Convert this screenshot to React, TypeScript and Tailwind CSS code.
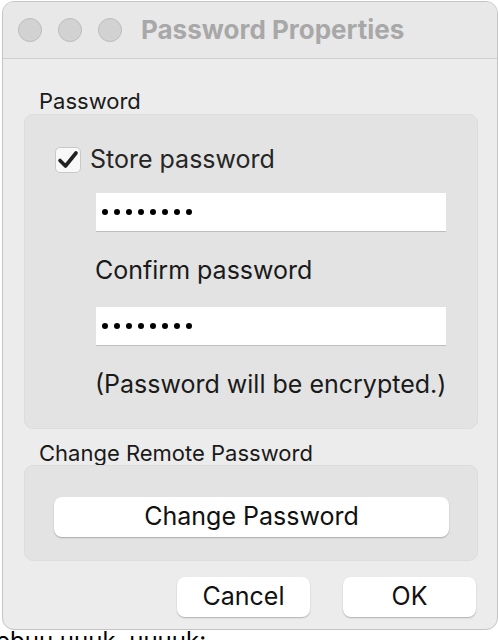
import React from "react";

function Dots() {
  return (
    <div className="flex items-center gap-[6.5px] pl-[6px]">
      {Array.from({ length: 8 }).map((_, i) => (
        <span key={i} className="block w-[5.5px] h-[5.5px] rounded-full bg-black" />
      ))}
    </div>
  );
}

export default function App() {
  const font = { fontFamily: "Inter, 'Noto Sans', sans-serif" };
  return (
    <div className="relative w-[498px] h-[640px] overflow-hidden bg-white" style={font}>
      <div className="absolute left-[-4px] top-[629px] text-[24px] leading-none text-black whitespace-nowrap">
        ebuu uuuk, uuuuk:
      </div>
      <div className="relative ml-[2px] mt-[1px] w-[496px] h-[629px] rounded-[12px] border border-[#c4c4c4] bg-[#ececec] overflow-hidden flex flex-col">
        <div className="h-[57px] shrink-0 border-b border-[#cfcfcf] bg-[#e8e8e8] flex items-center pl-[15px]">
          <div className="flex gap-[16px]">
            <span className="block w-[24px] h-[24px] rounded-full bg-[#d2d2d2] border border-[#bdbdbd]" />
            <span className="block w-[24px] h-[24px] rounded-full bg-[#d2d2d2] border border-[#bdbdbd]" />
            <span className="block w-[24px] h-[24px] rounded-full bg-[#d2d2d2] border border-[#bdbdbd]" />
          </div>
          <div className="ml-[19px] text-[26px] font-bold text-[#a8a8a8] leading-none">
            Password Properties
          </div>
        </div>

        <div className="flex flex-col pl-[21px] pr-[19px]">
          <div className="mt-[30px] h-[25px] flex items-center pl-[15px] text-[22px] text-[#1a1a1a]">Password</div>
          <div className="h-[315px] rounded-[9px] border border-[#dcdcdc] bg-[#e3e3e3] flex flex-col pl-[30px] pt-[32px]">
            <div className="h-[26px] flex items-center">
              <span className="w-[26px] h-[26px] rounded-[5px] bg-[#f8f8f8] border border-[#c9c9c9] flex items-center justify-center">
                <svg width="22" height="20" viewBox="0 0 22 20">
                  <path d="M3 10.5 L8.5 16 L19 3" fill="none" stroke="#222" strokeWidth="3.6" strokeLinecap="round" strokeLinejoin="round" />
                </svg>
              </span>
              <span className="ml-[9px] text-[25px] text-[#262626]">Store password</span>
            </div>
            <div className="mt-[20px] ml-[41px] w-[350px] h-[39px] bg-white border-b-[1.5px] border-[#bdbdbd] flex items-center">
              <Dots />
            </div>
            <div className="mt-[26px] ml-[40px] h-[26px] flex items-center text-[25px] text-[#1a1a1a]">Confirm password</div>
            <div className="mt-[23px] ml-[41px] w-[350px] h-[39px] bg-white border-b-[1.5px] border-[#bdbdbd] flex items-center">
              <Dots />
            </div>
            <div className="mt-[26px] ml-[40px] h-[26px] flex items-center text-[25px] text-[#1a1a1a]">
              (Password will be encrypted.)
            </div>
          </div>

          <div className="mt-[12px] h-[24px] flex items-center pl-[15px] text-[22px] text-[#1a1a1a]">Change Remote Password</div>
          <div className="h-[96px] rounded-[9px] border border-[#dcdcdc] bg-[#e3e3e3] pt-[31px] pl-[29px] pr-[28px]">
            <div className="h-[40px] rounded-[8px] bg-white shadow-[0_1px_1.5px_rgba(0,0,0,0.25)] flex items-center justify-center text-[25px] text-[#111]">
              Change Password
            </div>
          </div>

          <div className="mt-[16px] flex justify-end gap-[33px] pr-[2px]">
            <div className="w-[133px] h-[40px] rounded-[8px] bg-white shadow-[0_1px_1.5px_rgba(0,0,0,0.25)] flex items-center justify-center text-[25px] text-[#111]">
              Cancel
            </div>
            <div className="w-[133px] h-[40px] rounded-[8px] bg-white shadow-[0_1px_1.5px_rgba(0,0,0,0.25)] flex items-center justify-center text-[25px] text-[#111]">
              OK
            </div>
          </div>
        </div>
      </div>
    </div>
  );
}
